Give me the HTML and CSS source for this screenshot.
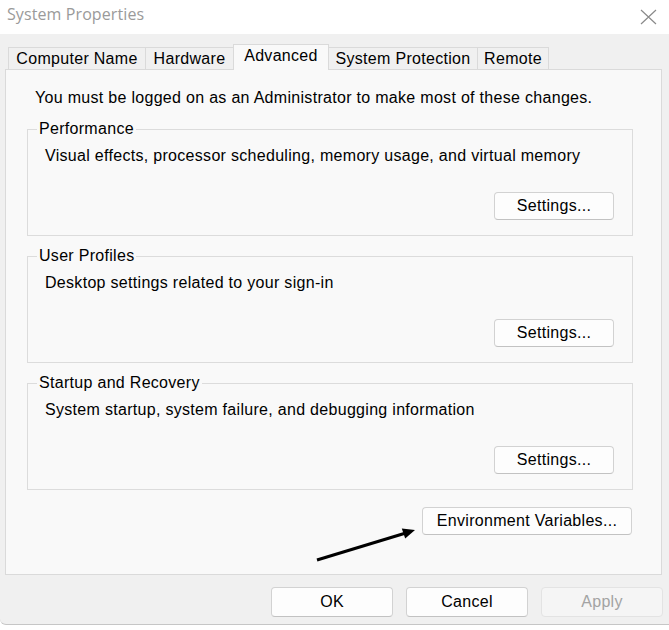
FILE: index.html
```html
<!DOCTYPE html>
<html lang="en">
<head>
<meta charset="utf-8">
<title>System Properties</title>
<link rel="stylesheet" href="styles.css">
</head>
<body>
<div class="window">
  <div class="titlebar">
    <span class="title">System Properties</span>
    <svg class="close" width="17" height="16" viewBox="0 0 17 16" aria-label="Close">
      <path d="M1 1 L16 15 M16 1 L1 15" stroke="#8a8a8a" stroke-width="1.2" fill="none"/>
    </svg>
  </div>
  <div class="content">
    <div class="tabs">
      <div class="tab tab-cn">Computer Name</div>
      <div class="tab tab-hw">Hardware</div>
      <div class="tab tab-adv active">Advanced</div>
      <div class="tab tab-sp">System Protection</div>
      <div class="tab tab-rm">Remote</div>
    </div>
    <div class="panel">
      <p class="intro">You must be logged on as an Administrator to make most of these changes.</p>
      <div class="group">
        <span class="legend">Performance</span>
        <p class="desc">Visual effects, processor scheduling, memory usage, and virtual memory</p>
        <div class="row-end"><button class="btn btn-settings">Settings...</button></div>
      </div>
      <div class="group">
        <span class="legend">User Profiles</span>
        <p class="desc">Desktop settings related to your sign-in</p>
        <div class="row-end"><button class="btn btn-settings">Settings...</button></div>
      </div>
      <div class="group">
        <span class="legend">Startup and Recovery</span>
        <p class="desc">System startup, system failure, and debugging information</p>
        <div class="row-end"><button class="btn btn-settings">Settings...</button></div>
      </div>
      <div class="row-end env-row"><button class="btn btn-env">Environment Variables...</button></div>
    </div>
    <div class="actions">
      <button class="btn btn-action">OK</button>
      <button class="btn btn-action">Cancel</button>
      <button class="btn btn-action disabled">Apply</button>
    </div>
  </div>
  <svg class="arrow" width="669" height="630" viewBox="0 0 669 630" aria-hidden="true">
    <line x1="317" y1="560" x2="405" y2="533.3" stroke="#000" stroke-width="3"/>
    <polygon points="415,530 405.2,538.6 401.8,528.4" fill="#000"/>
  </svg>
</div>
</body>
</html>
```
FILE: styles.css
```css
* { box-sizing: border-box; }
html, body { margin: 0; padding: 0; background: #fff; }
body {
  width: 669px;
  height: 630px;
  overflow: hidden;
  font-family: "Liberation Sans", Arial, sans-serif;
  font-size: 16px;
  letter-spacing: 0.3px;
  color: #000;
}
.window {
  position: relative;
  width: 669px;
  background: #f0f0f0;
  border-bottom: 1px solid #c6c6c6;
  border-bottom-left-radius: 6px;
}
.titlebar {
  height: 34px;
  background: #fff;
  display: flex;
  align-items: center;
  padding: 0 12px 6px 7px;
}
.title {
  font-family: "Open Sans", "Noto Sans", sans-serif;
  font-size: 16px;
  color: #9a9a9a;
  letter-spacing: 0.1px;
}
.close { margin-left: auto; margin-top: 6px; }
.content { padding: 10px 6px 7px 0; }
.tabs {
  display: flex;
  align-items: flex-end;
  height: 25px;
  padding-left: 8px;
  position: relative;
  z-index: 1;
}
.tab {
  height: 22px;
  line-height: 22px;
  text-align: center;
  background: #f0f0f0;
  border: 1px solid #dadada;
  border-bottom: none;
  margin-left: -1px;
  white-space: nowrap;
}
.tab:first-child { margin-left: 0; }
.tab-cn { width: 138px; }
.tab-hw { width: 89px; }
.tab-adv { width: 96px; }
.tab-sp { width: 150px; }
.tab-rm { width: 72px; }
.tab.active {
  height: 26px;
  line-height: 21px;
  background: #f9f9f9;
  margin-bottom: -1px;
}
.panel {
  margin-left: 5px;
  width: 657px;
  background: #f9f9f9;
  border: 1px solid #dadada;
  padding: 19px 28px 39px 21px;
}
.intro {
  margin: 0 0 22px 8px;
  line-height: 18px;
}
.group {
  position: relative;
  height: 107px;
  border: 1px solid #dcdcdc;
  padding: 17px 18px 0 17px;
}
.group + .group { margin-top: 20px; }
.legend {
  position: absolute;
  top: -10px;
  left: 9px;
  padding: 0 2px;
  line-height: 18px;
  background: #f9f9f9;
}
.desc { margin: 0; line-height: 18px; }
.row-end { display: flex; justify-content: flex-end; }
.group .row-end { margin-top: 27px; }
.btn {
  font-family: "Liberation Sans", Arial, sans-serif;
  font-size: 16px;
  letter-spacing: 0.3px;
  color: #000;
  background: #fdfdfd;
  border: 1px solid #d2d2d2;
  border-bottom-color: #c2c2c2;
  border-radius: 4px;
  padding: 0;
  height: 28px;
  line-height: 26px;
}
.btn-settings { width: 120px; }
.env-row { margin-top: 17px; padding-right: 1px; }
.btn-env { width: 210px; }
.actions {
  display: flex;
  justify-content: flex-end;
  gap: 13px;
  margin-top: 12px;
}
.btn-action { width: 122px; height: 30px; }
.btn.disabled {
  color: #a3a3a3;
  background: #f5f5f5;
  border-color: #e3e3e3;
}
.arrow {
  position: absolute;
  left: 0;
  top: 0;
  pointer-events: none;
}
```
